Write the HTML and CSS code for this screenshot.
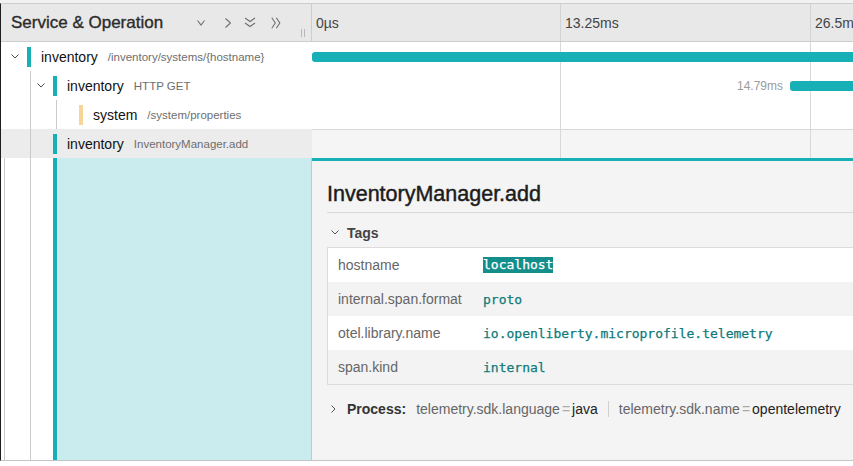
FILE: index.html
```html
<!DOCTYPE html>
<html>
<head>
<meta charset="utf-8">
<title>Trace</title>
<link rel="stylesheet" href="styles.css">
</head>
<body>
<div class="topstrip"></div>
<div class="trace">
  <div class="hdr">
    <div class="hdr-left">
      <span class="hdr-title">Service &amp; Operation</span>
      <div class="hdr-icons">
        <svg class="ic1" width="8" height="6" viewBox="0 0 8 6"><path d="M0.5 0.5 L4 5 L7.5 0.5"/></svg>
        <svg class="ic2" width="6" height="10" viewBox="0 0 6 10"><path d="M0.5 0.5 L5.5 5 L0.5 9.5"/></svg>
        <svg class="ic3" width="12" height="11" viewBox="0 0 12 11"><path d="M1 1 L6 4.5 L11 1 M1 6 L6 9.5 L11 6"/></svg>
        <svg class="ic4" width="10" height="12" viewBox="0 0 10 12"><path d="M0.8 0.8 L4.3 6 L0.8 11.2 M5.3 0.8 L8.8 6 L5.3 11.2"/></svg>
      </div>
      <span class="resizer"></span>
    </div>
    <div class="hdr-right">
      <span class="tick">0µs</span>
      <span class="tick">13.25ms</span>
      <span class="tick">26.5ms</span>
    </div>
  </div>

  <div class="row">
    <div class="name-col">
      <span class="toggle"><svg width="8" height="5" viewBox="0 0 8 5"><path d="M0.5 0.5 L4 4 L7.5 0.5"/></svg></span>
      <span class="sbar teal"></span>
      <span class="svc">inventory</span>
      <span class="op">/inventory/systems/{hostname}</span>
    </div>
    <div class="view-col">
      <div class="vbar" style="width:620px"></div>
    </div>
  </div>

  <div class="row">
    <div class="name-col">
      <span class="indent"></span>
      <span class="toggle"><svg width="8" height="5" viewBox="0 0 8 5"><path d="M0.5 0.5 L4 4 L7.5 0.5"/></svg></span>
      <span class="sbar teal"></span>
      <span class="svc">inventory</span>
      <span class="op">HTTP GET</span>
    </div>
    <div class="view-col">
      <div class="vlabel" style="width:478px">14.79ms</div>
      <div class="vbar" style="width:200px"></div>
    </div>
  </div>

  <div class="row">
    <div class="name-col">
      <span class="indent"></span>
      <span class="indent"></span>
      <span class="toggle"></span>
      <span class="sbar yellow"></span>
      <span class="svc">system</span>
      <span class="op">/system/properties</span>
    </div>
    <div class="view-col"></div>
  </div>

  <div class="row selected">
    <div class="name-col">
      <span class="indent"></span>
      <span class="toggle"></span>
      <span class="sbar teal"></span>
      <span class="svc">inventory</span>
      <span class="op">InventoryManager.add</span>
    </div>
    <div class="view-col"></div>
  </div>

  <div class="detail-row">
    <div class="d-left">
      <span class="d-g0"></span>
      <span class="d-g1"></span>
      <span class="d-sp"></span>
      <span class="d-fill"></span>
    </div>
    <div class="d-right">
      <h2 class="d-title">InventoryManager.add</h2>
      <div class="sect">
        <svg class="sect-chev" width="8" height="5" viewBox="0 0 8 5"><path d="M0.5 0.5 L4 4 L7.5 0.5"/></svg>
        <span class="sect-label">Tags</span>
      </div>
      <div class="kv">
        <div class="kv-row">
          <span class="kv-key">hostname</span>
          <span class="kv-val"><span class="hl">localhost</span></span>
        </div>
        <div class="kv-row alt">
          <span class="kv-key">internal.span.format</span>
          <span class="kv-val">proto</span>
        </div>
        <div class="kv-row">
          <span class="kv-key">otel.library.name</span>
          <span class="kv-val">io.openliberty.microprofile.telemetry</span>
        </div>
        <div class="kv-row alt">
          <span class="kv-key">span.kind</span>
          <span class="kv-val">internal</span>
        </div>
      </div>
      <div class="proc">
        <svg class="proc-chev" width="5" height="8" viewBox="0 0 5 8"><path d="M0.5 0.5 L4 4 L0.5 7.5"/></svg>
        <span class="proc-label">Process:</span>
        <span class="pk">telemetry.sdk.language</span><span class="eq">=</span><span class="pv">java</span>
        <span class="psep"></span>
        <span class="pk">telemetry.sdk.name</span><span class="eq">=</span><span class="pv">opentelemetry</span>
      </div>
    </div>
  </div>
</div>
</body>
</html>
```

FILE: styles.css
```css
* {
  box-sizing: border-box;
  margin: 0;
  padding: 0;
}

html, body {
  background: #ffffff;
}

body {
  font-family: "Liberation Sans", Arial, sans-serif;
  color: #222;
  width: 853px;
  height: 466px;
  overflow: hidden;
}

.topstrip {
  height: 3px;
  background: #f2f2f2;
}

.trace {
  width: 1100px;
  border-top: 1px solid #cdcdcd;
  border-left: 1px solid #1e1e1e;
  border-bottom: 1px solid #c4c4c4;
}

/* header */
.hdr {
  display: flex;
  height: 38px;
  background: #e8e8e8;
  border-bottom: 1px solid #cdcdcd;
}

.hdr-left {
  width: 311px;
  flex: none;
  display: flex;
  align-items: center;
  padding: 0 6px 0 10px;
  border-right: 1px solid #cdcdcd;
}

.hdr-title {
  font-size: 17px;
  color: #2b2b2b;
  -webkit-text-stroke: 0.35px #2b2b2b;
  white-space: nowrap;
}

.hdr-icons {
  margin-left: auto;
  display: flex;
  align-items: center;
}

.hdr-icons svg {
  display: block;
  fill: none;
  stroke: #6f6f6f;
  stroke-width: 1.1;
}

.ic2 { margin-left: 20px; }
.ic3 { margin-left: 13px; }
.ic4 { margin-left: 15px; }

.resizer {
  align-self: flex-end;
  margin: 0 0 4px 20px;
  width: 4px;
  height: 8px;
  border-left: 1px solid #b8b8b8;
  border-right: 1px solid #b8b8b8;
}

.hdr-right {
  flex: 1;
  display: grid;
  grid-template-columns: 248px 250px 1fr;
}

.tick {
  display: flex;
  align-items: center;
  padding-left: 4px;
  font-size: 14px;
  color: #444;
}

.tick + .tick {
  border-left: 1px solid #d2d2d2;
}

/* rows */
.row {
  display: flex;
  height: 29px;
}

.name-col {
  width: 311px;
  flex: none;
  display: flex;
  align-items: center;
  padding-left: 4px;
  white-space: nowrap;
}

.indent {
  width: 26px;
  flex: none;
  align-self: stretch;
  border-right: 1px solid #cacaca;
}

.toggle {
  width: 22px;
  flex: none;
  display: flex;
  align-items: center;
  padding-left: 6px;
}

.toggle svg {
  display: block;
  fill: none;
  stroke: #4a4a4a;
  stroke-width: 1;
}

.sbar {
  width: 4px;
  height: 20px;
  flex: none;
}

.teal { background: #17b0b7; }
.yellow { background: #f6d597; }

.svc {
  margin-left: 10px;
  font-size: 14px;
  color: #111;
}

.op {
  margin-left: 10px;
  font-size: 11.5px;
  color: #6e6e6e;
}

.view-col {
  flex: 1;
  display: flex;
  align-items: center;
  background-image: linear-gradient(#d8d8d8, #d8d8d8), linear-gradient(#d8d8d8, #d8d8d8);
  background-size: 1px 100%;
  background-position: 248px 0, 498px 0;
  background-repeat: no-repeat;
}

.vbar {
  height: 10px;
  flex: none;
  background: #17b0b7;
  border-radius: 3px 0 0 3px;
}

.vlabel {
  flex: none;
  text-align: right;
  padding-right: 7px;
  font-size: 12px;
  color: #9b9b9b;
}

.selected .name-col {
  background: #ececec;
}

.selected .view-col {
  background-color: #f5f5f5;
  border-top: 1px solid #d8d8d8;
}

/* detail */
.detail-row {
  display: flex;
  height: 302px;
}

.d-left {
  width: 311px;
  flex: none;
  display: flex;
}

.d-g0 {
  width: 4px;
  border-right: 1px solid #cacaca;
}

.d-g1 {
  width: 26px;
  border-right: 1px solid #cacaca;
}

.d-sp {
  width: 22px;
}

.d-fill {
  flex: 1;
  background: #cbecee;
  border-left: 4px solid #17b0b7;
  border-right: 1px solid #c8c8c8;
}

.d-right {
  flex: 1;
  background: #f4f4f4;
  border-top: 3px solid #17b0b7;
  padding: 21px 0 0 15px;
}

.d-title {
  font-size: 21.5px;
  line-height: 24px;
  font-weight: normal;
  color: #1c1c1c;
  -webkit-text-stroke: 0.45px #1c1c1c;
  padding-bottom: 6px;
  border-bottom: 1px solid #d9d9d9;
}

.sect {
  display: flex;
  align-items: center;
  height: 17px;
  margin-top: 11px;
}

.sect-chev {
  display: block;
  margin-left: 4px;
  fill: none;
  stroke: #555;
  stroke-width: 1;
}

.sect-label {
  margin-left: 8px;
  font-size: 14px;
  font-weight: bold;
  color: #444;
}

.kv {
  width: 700px;
  margin-top: 6px;
  border: 1px solid #dcdcdc;
  background: #fff;
}

.kv-row {
  display: flex;
  align-items: center;
  height: 34px;
}

.kv-row.alt {
  background: #f3f3f3;
}

.kv-key {
  width: 155px;
  flex: none;
  padding-left: 10px;
  font-size: 14px;
  color: #666;
}

.kv-val {
  font-family: "DejaVu Sans Mono", "Liberation Mono", monospace;
  font-size: 13px;
  color: #0e7a7a;
  -webkit-text-stroke: 0.25px #0e7a7a;
}

.hl {
  display: inline-block;
  line-height: 16px;
  background: #138e8b;
  color: #fff;
  -webkit-text-stroke: 0.25px #fff;
}

.proc {
  display: flex;
  align-items: center;
  height: 20px;
  margin-top: 14px;
  font-size: 14px;
  white-space: nowrap;
}

.proc-chev {
  display: block;
  margin-left: 4px;
  fill: none;
  stroke: #555;
  stroke-width: 1;
}

.proc-label {
  margin-left: 11px;
  font-weight: bold;
  color: #333;
}

.pk {
  color: #666;
}

.proc-label + .pk {
  margin-left: 10px;
}

.eq {
  margin: 0 2px;
  color: #aaa;
}

.pv {
  color: #222;
}

.psep {
  width: 1px;
  height: 16px;
  margin: 0 10px;
  background: #d0d0d0;
}
```
